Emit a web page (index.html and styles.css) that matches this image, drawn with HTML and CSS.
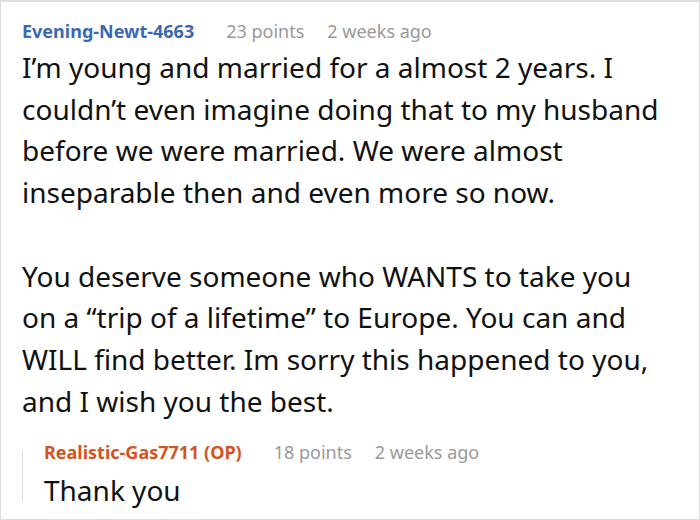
FILE: index.html
```html
<!DOCTYPE html>
<html>
<head>
<meta charset="utf-8">
<link rel="stylesheet" href="styles.css">
</head>
<body>
<div class="card">
  <div class="comment">
    <div class="meta">
      <span class="author">Evening-Newt-4663</span>
      <span class="info">23 points</span>
      <span class="info">2 weeks ago</span>
    </div>
    <div class="body">
      <p>I’m young and married for a almost 2 years. I couldn’t even imagine doing that to my husband before we were married. We were almost inseparable then and even more so now.</p>
      <p>You deserve someone who WANTS to take you on a “trip of a lifetime” to Europe. You can and WILL find better. Im sorry this happened to you, and I wish you the best.</p>
    </div>
    <div class="reply">
      <div class="meta">
        <span class="author op">Realistic-Gas7711 (OP)</span>
        <span class="info">18 points</span>
        <span class="info">2 weeks ago</span>
      </div>
      <div class="body reply-body">
        <p>Thank you</p>
      </div>
    </div>
  </div>
</div>
</body>
</html>
```

FILE: styles.css
```css
* { box-sizing: border-box; }
html, body { margin: 0; padding: 0; background: #fff; }
body { font-family: "Noto Sans", "Open Sans", sans-serif; }
.card {
  width: 700px;
  height: 520px;
  border: 1px solid #dedede;
  border-top-width: 2px;
  padding: 13px 32px 0 21px;
  overflow: hidden;
}
.meta {
  display: flex;
  gap: 23px;
  font-size: 18px;
  line-height: 32px;
  align-items: baseline;
}
.author { font-weight: 700; color: #3a68b3; margin-right: 9px; }
.author.op { color: #d6531f; }
.info { color: #999; }
.body { font-size: 28px; line-height: 41.7px; color: #111; }
.body p { margin: 0 0 41.7px 0; }
.body p:last-child { margin-bottom: 0; }
.reply {
  position: relative;
  margin-top: 14px;
  padding-left: 22px;
}
.reply-body { margin-top: 2px; }
.reply::before {
  content: "";
  position: absolute;
  left: 0;
  top: 15px;
  bottom: 11px;
  width: 1px;
  background: #dcdcdc;
}
```
